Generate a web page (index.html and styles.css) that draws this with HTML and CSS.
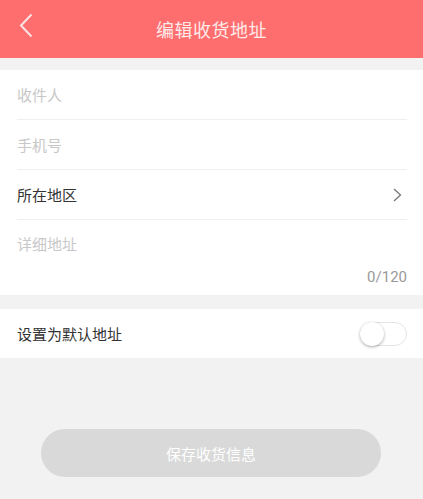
FILE: index.html
```html
<!DOCTYPE html>
<html lang="zh">
<head>
<meta charset="utf-8">
<title>编辑收货地址</title>
<link rel="stylesheet" href="styles.css">
</head>
<body>
<header class="topbar">
  <span class="back">
    <svg width="14" height="25" viewBox="0 0 14 25"><polyline points="12.5,1.5 2,12.5 12.5,23.5" fill="none" stroke="#fbe3e3" stroke-width="2"/></svg>
  </span>
  <h1 class="title">编辑收货地址</h1>
</header>
<section class="card">
  <div class="row"><span class="ph">收件人</span></div>
  <div class="row"><span class="ph">手机号</span></div>
  <div class="row"><span class="label">所在地区</span>
    <svg class="arrow" width="9" height="14" viewBox="0 0 9 14"><polyline points="1,1 7.5,7 1,13" fill="none" stroke="#777" stroke-width="1.3"/></svg>
  </div>
  <div class="detail">
    <span class="ph">详细地址</span>
    <span class="count">0/120</span>
  </div>
</section>
<section class="card default-row">
  <span class="label">设置为默认地址</span>
  <span class="switch"><span class="knob"></span></span>
</section>
<div class="actions">
  <button class="save">保存收货信息</button>
</div>
</body>
</html>
```
FILE: styles.css
```css
* { box-sizing: border-box; }
html, body { margin: 0; padding: 0; }
body {
  background: #f2f2f2;
  font-family: "Noto Sans CJK SC", "Noto Sans", sans-serif;
  width: 423px;
  height: 499px;
  overflow: hidden;
}
.topbar {
  height: 58px;
  background: #ff6e6e;
  display: flex;
  align-items: center;
  justify-content: center;
  position: relative;
}
.back {
  position: absolute;
  left: 19px;
  top: 13px;
  display: flex;
}
.title {
  margin: 0;
  font-size: 18px;
  font-weight: 400;
  color: #fdeaea;
  letter-spacing: 0.5px;
}
.card {
  background: #fff;
  margin-top: 12px;
  padding: 0 16px 0 17px;
}
.row {
  height: 50px;
  display: flex;
  align-items: center;
  justify-content: space-between;
  border-bottom: 1px solid #efefef;
  font-size: 15px;
}
.ph { color: #c8c8c8; font-size: 15px; }
.label { color: #333; font-size: 15px; }
.arrow { margin-right: 5px; }
.detail {
  height: 75px;
  display: flex;
  flex-direction: column;
  justify-content: space-between;
  padding: 13px 0 9px;
}
.count {
  align-self: flex-end;
  color: #999;
  font-size: 15px;
  font-family: "Roboto", "Noto Sans", sans-serif;
  line-height: 18px;
}
.default-row {
  margin-top: 14px;
  height: 49px;
  display: flex;
  align-items: center;
  justify-content: space-between;
}
.switch {
  width: 47px;
  height: 24px;
  border-radius: 12px;
  border: 1px solid #e4e4e4;
  background: #fff;
  position: relative;
  margin-top: 1px;
}
.knob {
  position: absolute;
  left: -1px;
  top: -1px;
  width: 24px;
  height: 24px;
  border-radius: 50%;
  background: #fff;
  box-shadow: 0 1px 3px rgba(0,0,0,0.35);
}
.actions {
  display: flex;
  justify-content: center;
  padding-top: 71px;
}
.save {
  width: 340px;
  height: 48px;
  margin-left: -1px;
  border: none;
  border-radius: 24px;
  background: #d9d9d9;
  color: #fff;
  font-family: "Noto Sans CJK SC", "Noto Sans", sans-serif;
  font-size: 15px;
}
```
